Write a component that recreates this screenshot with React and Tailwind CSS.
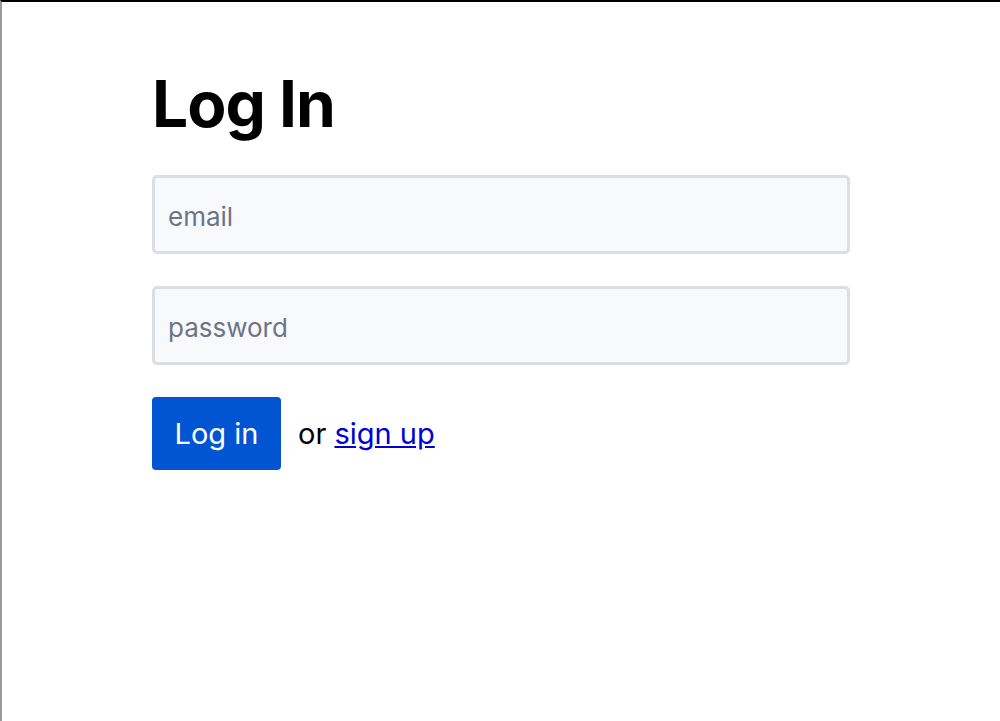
export default function App() {
  return (
    <div className="w-[1000px] h-[721px] bg-white border-t-2 border-t-black border-l-2 border-l-[#9a9a9a] overflow-hidden" style={{ fontFamily: "Inter, 'Liberation Sans', sans-serif" }}>
      <div className="ml-[150px] w-[698px] pt-[70px]">
        <h1 className="text-[64px] leading-[64px] font-bold text-black tracking-[-1px]">Log In</h1>
        <div className="mt-[39px] flex flex-col gap-[32px]">
          <input
            placeholder="email"
            className="h-[79px] w-full rounded-[5px] border-[3px] border-[#dcdee2] bg-[#f8f9fb] pl-[13px] pr-[13px] pt-[3px] text-[26px] text-[#333] placeholder:text-[#6b7488] outline-none"
          />
          <input
            placeholder="password"
            type="password"
            className="h-[79px] w-full rounded-[5px] border-[3px] border-[#dcdee2] bg-[#f8f9fb] pl-[13px] pr-[13px] pt-[3px] text-[26px] text-[#333] placeholder:text-[#6b7488] outline-none"
          />
        </div>
        <div className="mt-[32px] flex items-center">
          <button className="h-[73px] w-[129px] rounded-[4px] bg-[#0155d3] text-white text-[29px]">Log in</button>
          <span className="ml-[17px] text-[29px] text-black">or <a href="#" className="text-[#0000d6] underline">sign up</a></span>
        </div>
      </div>
    </div>
  );
}
